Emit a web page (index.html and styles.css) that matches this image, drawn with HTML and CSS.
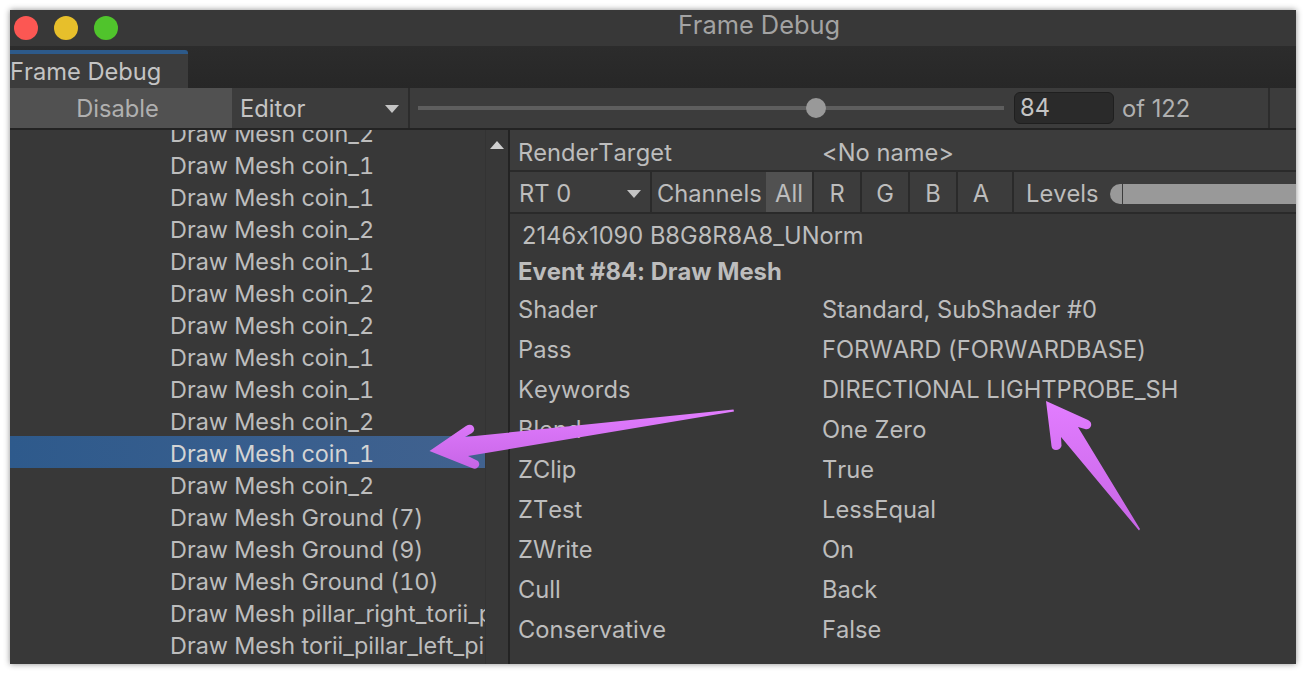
FILE: index.html
```html
<!DOCTYPE html>
<html lang="en">
<head>
    <meta charset="UTF-8" />
    <title>Frame Debug</title>
    <link rel="stylesheet" href="styles.css">
</head>
<body>
    <div class="window">
        <div class="titlebar">
            <span class="light red"></span>
            <span class="light yellow"></span>
            <span class="light green"></span>
            <div class="title">Frame Debug</div>
        </div>
        <div class="tabbar">
            <div class="tab">Frame Debug</div>
        </div>
        <div class="toolbar">
            <div class="disable-btn">Disable</div>
            <div class="dropdown editor-drop">Editor<span class="caret"></span></div>
            <div class="slider">
                <div class="slider-track"></div>
                <div class="slider-thumb"></div>
            </div>
            <div class="count-input">84</div>
            <div class="count-of">of 122</div>
            <div class="toolbar-end"></div>
        </div>
        <div class="main">
            <div class="events">
                <div class="event-list">
                    <div class="event">Draw Mesh coin_2</div>
                    <div class="event">Draw Mesh coin_1</div>
                    <div class="event">Draw Mesh coin_1</div>
                    <div class="event">Draw Mesh coin_2</div>
                    <div class="event">Draw Mesh coin_1</div>
                    <div class="event">Draw Mesh coin_2</div>
                    <div class="event">Draw Mesh coin_2</div>
                    <div class="event">Draw Mesh coin_1</div>
                    <div class="event">Draw Mesh coin_1</div>
                    <div class="event">Draw Mesh coin_2</div>
                    <div class="event selected">Draw Mesh coin_1</div>
                    <div class="event">Draw Mesh coin_2</div>
                    <div class="event">Draw Mesh Ground (7)</div>
                    <div class="event">Draw Mesh Ground (9)</div>
                    <div class="event">Draw Mesh Ground (10)</div>
                    <div class="event">Draw Mesh pillar_right_torii_pillar</div>
                    <div class="event">Draw Mesh torii_pillar_left_pillar</div>
                </div>
            </div>
            <div class="scrollbar"><span class="scroll-up"></span></div>
            <div class="details">
                <div class="rt-row">
                    <span class="key">RenderTarget</span>
                    <span>&lt;No name&gt;</span>
                </div>
                <div class="channels-row">
                    <div class="dropdown rt-drop">RT 0<span class="caret"></span></div>
                    <div class="channels-label">Channels</div>
                    <div class="chan chan-all">All</div>
                    <div class="chan">R</div>
                    <div class="chan">G</div>
                    <div class="chan">B</div>
                    <div class="chan">A</div>
                    <div class="levels">
                        <span>Levels</span>
                        <span class="levels-knob"></span>
                        <span class="levels-bar"></span>
                    </div>
                </div>
                <div class="format">2146x1090 B8G8R8A8_UNorm</div>
                <div class="event-name">Event #84: Draw Mesh</div>
                <div class="prop"><span class="key">Shader</span><span>Standard, SubShader #0</span></div>
                <div class="prop"><span class="key">Pass</span><span>FORWARD (FORWARDBASE)</span></div>
                <div class="prop"><span class="key">Keywords</span><span>DIRECTIONAL LIGHTPROBE_SH</span></div>
                <div class="prop"><span class="key">Blend</span><span>One Zero</span></div>
                <div class="prop"><span class="key">ZClip</span><span>True</span></div>
                <div class="prop"><span class="key">ZTest</span><span>LessEqual</span></div>
                <div class="prop"><span class="key">ZWrite</span><span>On</span></div>
                <div class="prop"><span class="key">Cull</span><span>Back</span></div>
                <div class="prop"><span class="key">Conservative</span><span>False</span></div>
            </div>
        </div>
    </div>

    <!-- flechas de anotacion encima de la captura -->
    <svg class="arrows" width="1306" height="674" viewBox="0 0 1306 674">
        <defs>
            <linearGradient id="arrow-fill" x1="0" y1="0" x2="0" y2="1">
                <stop offset="0" stop-color="#e27dff"/>
                <stop offset="1" stop-color="#c765e6"/>
            </linearGradient>
        </defs>
        <path fill="url(#arrow-fill)" d="M733.5 409.5 L734 411.5 L468 456 L478 461 Q481 465 477 468 Q475 469.500 472 468 L429.500 451 L466 426 Q470 423.500 473 426 Q476 430 472 433 L465 437 Z"/>
        <path fill="url(#arrow-fill)" d="M1140 529 L1139 530.500 L1061 437 L1061.500 446 Q1060 450 1056 450 Q1052 450 1051.500 446 L1046 401 L1088 420 Q1092 422 1091 426 Q1089 430 1085 429 L1078 427 Z"/>
    </svg>
</body>
</html>
```

FILE: styles.css
```css
body {
    margin: 0;
    width: 1306px;
    height: 674px;
    overflow: hidden;
    background: #fff;
    font-family: Inter, "Noto Sans", sans-serif;
    font-size: 23.7px;
    font-feature-settings: "calt" 0;
    font-kerning: none;
    color: #bdbdbd;
}
.window {
    margin: 10px;
    width: 1286px;
    height: 654px;
    display: flex;
    flex-direction: column;
    background: #383838;
    box-shadow: 0 0 6px rgba(0, 0, 0, 0.45);
    overflow: hidden;
}
.titlebar {
    height: 36px;
    flex: none;
    display: flex;
    align-items: center;
    gap: 16px;
    padding-left: 4px;
    position: relative;
    background: #383838;
}
.light {
    width: 24px;
    height: 24px;
    border-radius: 50%;
}
.red { background: #fc5753; }
.yellow { background: #e7bf2b; }
.green { background: #50c42c; }
.title {
    position: absolute;
    left: 212px;
    right: 0;
    top: 0;
    font-size: 25.4px;
    line-height: 30px;
    text-align: center;
    color: #a3a3a3;
}
.tabbar {
    height: 42px;
    flex: none;
    display: flex;
    align-items: flex-end;
    background: linear-gradient(#2c2c2c, #272727);
}
.tab {
    width: 178px;
    height: 38px;
    box-sizing: border-box;
    border-top: 4px solid #2d5a8a;
    border-top-right-radius: 3px;
    background: #3c3c3c;
    line-height: 36px;
    color: #c4c4c4;
}
.toolbar {
    height: 42px;
    flex: none;
    box-sizing: border-box;
    border-bottom: 2px solid #232323;
    display: flex;
    align-items: stretch;
    background: #3c3c3c;
    line-height: 42px;
}
.disable-btn {
    width: 222px;
    box-sizing: border-box;
    padding-right: 7px;
    background: #515151;
    text-align: center;
    color: #b0b0b0;
}
.dropdown {
    box-sizing: border-box;
    display: flex;
    align-items: center;
    justify-content: space-between;
}
.caret {
    width: 0;
    height: 0;
    border-left: 7px solid transparent;
    border-right: 7px solid transparent;
    border-top: 8px solid #c4c4c4;
}
.editor-drop {
    width: 174px;
    margin-left: 4px;
    padding: 1px 9px 0 4px;
    border-right: 2px solid #2c2c2c;
    color: #c4c4c4;
}
.slider {
    width: 586px;
    margin-left: 8px;
    position: relative;
}
.slider-track {
    margin-top: 18px;
    height: 4px;
    background: #5e5e5e;
}
.slider-thumb {
    position: absolute;
    left: 388px;
    top: 10px;
    width: 20px;
    height: 20px;
    border-radius: 50%;
    background: #999;
}
.count-input {
    width: 100px;
    height: 32px;
    margin: 4px 0 0 10px;
    box-sizing: border-box;
    padding-left: 5px;
    border: 1px solid #1f1f1f;
    border-radius: 6px;
    background: #2a2a2a;
    line-height: 30px;
    color: #c4c4c4;
}
.count-of {
    width: 154px;
    padding-left: 8px;
    box-sizing: border-box;
    color: #b0b0b0;
}
.toolbar-end {
    flex: 1;
    border-left: 2px solid #2c2c2c;
}
.main {
    flex: 1;
    display: flex;
    min-height: 0;
}
.events {
    width: 475px;
    flex: none;
    overflow: hidden;
}
.event-list {
    margin-top: -14px;
}
.event {
    height: 32px;
    padding-left: 160px;
    line-height: 36px;
    white-space: nowrap;
    font-size: 23.4px;
    font-feature-settings: "calt" 0, "tnum" 1;
}
.selected {
    background: linear-gradient(90deg, #2e5a8c, #41628f);
    color: #d4d4d4;
}
.scrollbar {
    width: 25px;
    flex: none;
    box-sizing: border-box;
    border-left: 1px solid #333;
    border-right: 2px solid #232323;
    display: flex;
    justify-content: center;
    padding-top: 11px;
}
.scroll-up {
    width: 0;
    height: 0;
    border-left: 7px solid transparent;
    border-right: 7px solid transparent;
    border-bottom: 8px solid #d0d0d0;
}
.details {
    flex: 1;
    min-width: 0;
    overflow: hidden;
}
.rt-row {
    height: 42px;
    box-sizing: border-box;
    border-bottom: 2px solid #2a2a2a;
    display: flex;
    align-items: center;
    padding: 5px 0 0 8px;
    background: #3c3c3c;
}
.key {
    width: 304px;
    flex: none;
}
.channels-row {
    height: 42px;
    box-sizing: border-box;
    border-bottom: 2px solid #2a2a2a;
    display: flex;
    align-items: stretch;
    background: #3c3c3c;
    line-height: 44px;
}
.rt-drop {
    width: 142px;
    padding: 3px 9px 0;
    border-right: 2px solid #2a2a2a;
}
.channels-label {
    width: 114px;
    padding-left: 5px;
    box-sizing: border-box;
}
.chan {
    width: 48px;
    flex: none;
    box-sizing: border-box;
    border-right: 2px solid #2a2a2a;
    text-align: center;
}
.chan-all {
    background: #515151;
}
.chan:nth-child(7) {
    width: 56px;
    padding-right: 8px;
}
.levels {
    flex: 1;
    display: flex;
    align-items: center;
    padding: 4px 0 0 12px;
}
.levels-knob {
    width: 12px;
    height: 20px;
    margin-left: 11px;
    flex: none;
    border-radius: 10px 0 0 10px;
    background: #999;
}
.levels-bar {
    flex: 1;
    height: 20px;
    margin-left: 1px;
    background: #999;
}
.format {
    height: 44px;
    padding-left: 12px;
    line-height: 44px;
}
.event-name {
    height: 28px;
    margin-bottom: 3px;
    padding-left: 8px;
    line-height: 28px;
    font-weight: 700;
    font-size: 23.8px;
}
.prop {
    height: 40px;
    display: flex;
    align-items: center;
    padding-left: 8px;
    white-space: nowrap;
}
.arrows {
    position: absolute;
    left: 0;
    top: 0;
}
```
